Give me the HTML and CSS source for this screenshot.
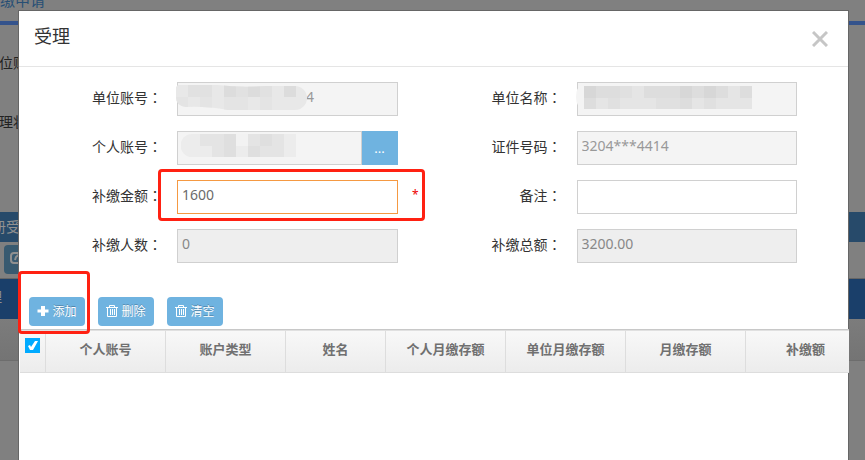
FILE: index.html
```html
<!DOCTYPE html>
<html lang="zh-CN">
<head>
    <meta charset="UTF-8">
    <meta name="viewport" content="width=device-width, initial-scale=1.0">
    <title>受理</title>
    <link rel="stylesheet" href="styles.css">
</head>
<body>
    <div class="page">
        <div class="page-title">补缴申请</div>
        <div class="page-search">
            <div>单位账号</div>
            <div>受理状态</div>
        </div>
        <div class="page-band">注册受理</div>
        <div class="page-tools">
            <button type="button" class="page-btn" aria-label="编辑">
                <svg width="14" height="14" viewBox="0 0 14 14" fill="none" stroke="currentColor" stroke-width="2"><path d="M9 2H4a3 3 0 0 0-3 3v4a3 3 0 0 0 3 3h5a3 3 0 0 0 3-3M5 9l1-3 6-5"/></svg>
            </button>
        </div>
        <div class="page-result">受理</div>
        <div class="page-thead"></div>
    </div>

    <div class="modal" role="dialog" aria-labelledby="modalTitle">
        <div class="modal-header">
            <h4 id="modalTitle">受理</h4>
            <button type="button" class="close" aria-label="关闭">
                <svg width="16" height="16" viewBox="0 0 16 16" stroke="#c6c6c6" stroke-width="3"><path d="M1 1l14 14M15 1L1 15"/></svg>
            </button>
        </div>

        <form class="form">
            <label for="unitNo">单位账号<span class="colon" lang="zh-TW">：</span></label>
            <div class="field">
                <input type="text" id="unitNo" class="masked-value" value="4" readonly>
                <svg class="mask" width="132" height="25" viewBox="0 0 132 25">
                    <clipPath id="maskA"><path d="M2 0H42Q65 3 90 1H119a12 12 0 0 1 0 24H52Q30 21 10 22Q0 21 0 12V2z"/></clipPath>
                    <g clip-path="url(#maskA)">
                        <path fill="#e8e8e8" d="M0 0h132v25H0z"/>
                        <path fill="#e1e1e1" d="M12 0h24v12H12zM60 0h12v12H60zM84 0h12v12H84z"/>
                        <path fill="#dcdcdc" d="M48 0h12v12H48zM108 0h12v12h-12zM72 0h12v12H72z"/>
                        <path fill="#e4e4e4" d="M0 12h12v13H0zM24 12h12v13H24zM48 12h24v13H48zM84 12h12v13H84z"/>
                    </g>
                </svg>
            </div>
            <label for="unitName">单位名称<span class="colon" lang="zh-TW">：</span></label>
            <div class="field">
                <input type="text" id="unitName" readonly>
                <svg class="mask" width="176" height="25" viewBox="0 0 176 25">
                    <path fill="#f4f4f4" d="M8 0Q0 1 0 12T8 23z"/>
                    <path fill="#e5e5e5" d="M8 1h168v23H8z"/>
                    <path fill="#d7d7d7" d="M8 1h12v12H8zM104 1h12v12h-12zM128 1h12v12h-12z"/>
                    <path fill="#dddddd" d="M20 1h24v12H20zM68 1h36v12H68zM116 1h12v12h-12zM140 1h12v12h-12zM164 1h12v12h-12zM8 13h12v11H8zM104 13h12v11h-12z"/>
                    <path fill="#e0e0e0" d="M44 1h12v12H44zM32 13h12v11H32zM80 13h24v11H80zM128 13h12v11h-12z"/>
                </svg>
            </div>

            <label for="personNo">个人账号<span class="colon" lang="zh-TW">：</span></label>
            <div class="field">
                <input type="text" id="personNo" readonly>
                <button type="button" class="pick">...</button>
                <svg class="mask mask-person" width="115" height="23" viewBox="0 0 115 23">
                    <clipPath id="maskB"><path d="M11 0H115V23H11A11 11 0 0 1 11 0z"/></clipPath>
                    <g clip-path="url(#maskB)">
                        <path fill="#ececec" d="M0 0h115v23H0z"/>
                        <path fill="#e4e4e4" d="M19 0h24v12H19zM67 0h12v12H67zM91 0h12v12H91zM31 12h12v11H31zM79 12h24v11H79z"/>
                        <path fill="#dfdfdf" d="M43 0h12v12H43zM79 0h12v12H79zM43 12h12v11H43zM67 12h12v11H67z"/>
                        <path fill="#f2f2f2" d="M55 0h12v12H55z"/>
                    </g>
                </svg>
            </div>
            <label for="idNo">证件号码<span class="colon" lang="zh-TW">：</span></label>
            <div class="field">
                <input type="text" id="idNo" value="3204***4414" readonly>
            </div>

            <label for="amount">补缴金额<span class="colon" lang="zh-TW">：</span></label>
            <div class="field">
                <input type="text" id="amount" class="active" value="1600">
                <span class="required">*</span>
                <span class="mark mark-amount"></span>
            </div>
            <label for="remark">备注<span class="colon" lang="zh-TW">：</span></label>
            <div class="field">
                <input type="text" id="remark">
            </div>

            <label for="count">补缴人数<span class="colon" lang="zh-TW">：</span></label>
            <div class="field">
                <input type="text" id="count" value="0" disabled>
            </div>
            <label for="total">补缴总额<span class="colon" lang="zh-TW">：</span></label>
            <div class="field">
                <input type="text" id="total" value="3200.00" disabled>
            </div>
        </form>

        <div class="toolbar">
            <button type="button" class="btn">
                <svg width="12" height="12" viewBox="0 0 12 12" fill="#fff"><path d="M4 1h4v3.500h3.500v3H8V11H4V7.500H.5v-3H4z"/></svg>添加
            </button>
            <button type="button" class="btn">
                <svg width="12" height="14" viewBox="0 0 12 14" fill="none" stroke="#fff"><path d="M0 3.500h12M3.500 3V1.500h5V3M1.500 4v8.500h9V4M4.500 5v6M6.500 5v6M8.500 5v6"/></svg>删除
            </button>
            <button type="button" class="btn">
                <svg width="12" height="14" viewBox="0 0 12 14" fill="none" stroke="#fff"><path d="M0 3.500h12M3.500 3V1.500h5V3M1.500 4v8.500h9V4M4.500 5v6M6.500 5v6M8.500 5v6"/></svg>清空
            </button>
            <span class="mark mark-add"></span>
        </div>

        <div class="grid">
            <table>
                <colgroup>
                    <col class="col-check"><col><col><col class="col-name"><col><col><col><col>
                </colgroup>
                <thead>
                    <tr>
                        <th class="check"><input type="checkbox" aria-label="全选" checked></th>
                        <th>个人账号</th>
                        <th>账户类型</th>
                        <th>姓名</th>
                        <th>个人月缴存额</th>
                        <th>单位月缴存额</th>
                        <th>月缴存额</th>
                        <th>补缴额</th>
                    </tr>
                </thead>
            </table>
        </div>
    </div>
</body>
</html>
```
FILE: styles.css
```css
* {
    box-sizing: border-box;
}

body {
    margin: 0;
    height: 100vh;
    overflow: hidden;
    background: #808080;
    color: #333;
    font-family: "Noto Sans", "Noto Sans CJK SC", sans-serif;
    font-size: 14px;
}

button {
    padding: 0;
    border: none;
    font-family: inherit;
    cursor: pointer;
}

/* page behind the dialog */
.page-title {
    height: 26px;
    margin-top: -1px;
    margin-left: -15px;
    border-bottom: 4px solid #34538c;
    color: #274f75;
    font-size: 15px;
    line-height: 2px;
}

.page-search {
    display: flex;
    flex-direction: column;
    gap: 39px;
    height: 187px;
    margin-left: -15px;
    padding-top: 28px;
    color: #222;
    line-height: 20px;
}

.page-band {
    height: 30px;
    background: #274a6a;
    color: #909090;
    line-height: 30px;
    text-indent: -22px;
}

.page-tools {
    height: 37px;
    padding: 3px 4px;
    border-bottom: 1px solid #666;
}

.page-btn {
    width: 60px;
    height: 29px;
    padding-left: 6px;
    border-radius: 4px;
    background: #385a70;
    color: #909090;
    text-align: left;
}

.page-result {
    height: 40px;
    background: #1a3f6a;
    color: #909090;
    line-height: 36px;
    text-indent: -26px;
}

.page-thead {
    height: 42px;
    border-bottom: 1px solid #6d6d6d;
    background: linear-gradient(#7c7c7c, #747474);
}

/* dialog */
.modal {
    position: fixed;
    top: 10px;
    right: 16px;
    bottom: -10px;
    left: 18px;
    border: 1px solid #666;
    background: #fff;
}

.modal-header {
    display: flex;
    align-items: center;
    justify-content: space-between;
    height: 56px;
    padding: 0 20px 0 15px;
    border-bottom: 1px solid #e5e5e5;
}

.modal-header h4 {
    margin: 0;
    padding-bottom: 7px;
    font-size: 18px;
    font-weight: normal;
}

.close {
    display: flex;
    background: none;
}

.form {
    display: grid;
    grid-template-columns: 158px 1fr 179px 1fr 51px;
    row-gap: 15px;
    padding: 15px 0 34px;
}

.form label {
    padding-right: 15px;
    line-height: 31px;
    text-align: right;
}

.form label:nth-of-type(odd) {
    grid-column: 1;
}

.colon {
    font-family: "Noto Sans CJK TC", sans-serif;
}

.field {
    position: relative;
    display: flex;
    min-width: 0;
    height: 34px;
}

.field input {
    flex: 1;
    min-width: 0;
    height: 34px;
    padding: 0 4px 5px;
    border: 1px solid #d0d0d0;
    border-radius: 0;
    background: #fff;
    color: #6b6b6b;
    font-family: inherit;
    font-size: 14px;
    outline: none;
}

.field input:read-only {
    background: #f4f4f4;
    color: #999;
}

.field input:disabled {
    background: #eee;
    color: #888;
}

.field input.active {
    border-color: #f59942;
}

.field input.masked-value {
    padding-left: 128px;
}

.pick {
    width: 36px;
    background: #6fb3e0;
    color: #fff;
    font-size: 13px;
}

.mask {
    position: absolute;
    top: 3px;
    left: -1px;
}

.mask-person {
    left: 4px;
}

.required {
    position: absolute;
    top: 6px;
    right: -21px;
    color: #e00;
    font-size: 12px;
}

/* red frames */
.mark {
    position: absolute;
    border: 3px solid #ff2112;
    border-radius: 4px;
    pointer-events: none;
}

.mark-amount {
    top: -11px;
    right: -27px;
    bottom: -7px;
    left: -19px;
}

.mark-add {
    top: -26px;
    left: -1px;
    width: 72px;
    height: 63px;
}

.toolbar {
    position: relative;
    display: flex;
    gap: 13px;
    padding: 0 10px 3px;
}

.btn {
    display: flex;
    align-items: center;
    justify-content: center;
    gap: 3px;
    width: 56px;
    height: 29px;
    padding-bottom: 2px;
    border-radius: 4px;
    background: #6fb3e0;
    color: #fff;
    font-size: 12px;
    text-shadow: 0 -1px 0 rgba(0, 0, 0, 0.25);
}

.grid {
    margin: 0 -1px 0 1px;
    overflow: hidden;
    border-top: 1px solid #c8c8c8;
}

.grid table {
    width: 846px;
    table-layout: fixed;
    border-collapse: separate;
    border-spacing: 0;
}

.col-check {
    width: 26px;
}

.col-name {
    width: 100px;
}

.grid th {
    height: 43px;
    padding: 0 0 7px;
    border-top: 1px solid #e0e0e0;
    border-right: 1px solid #ddd;
    border-bottom: 1px solid #ddd;
    background: linear-gradient(#f8f8f8, #ececec);
    color: #707070;
    font-size: 13px;
    font-weight: bold;
}

.grid th.check {
    padding: 7px 0 0 5px;
    text-align: left;
    vertical-align: top;
}

.check input {
    display: block;
    width: 15px;
    height: 15px;
    margin: 0;
    appearance: none;
    background: #0af;
}

.check input:checked::before {
    content: "";
    display: block;
    width: 15px;
    height: 15px;
    background: #fff;
    clip-path: polygon(3px 8px, 5px 7px, 6px 9px, 10px 3px, 13px 3px, 8px 12px, 5px 12px);
}
```
